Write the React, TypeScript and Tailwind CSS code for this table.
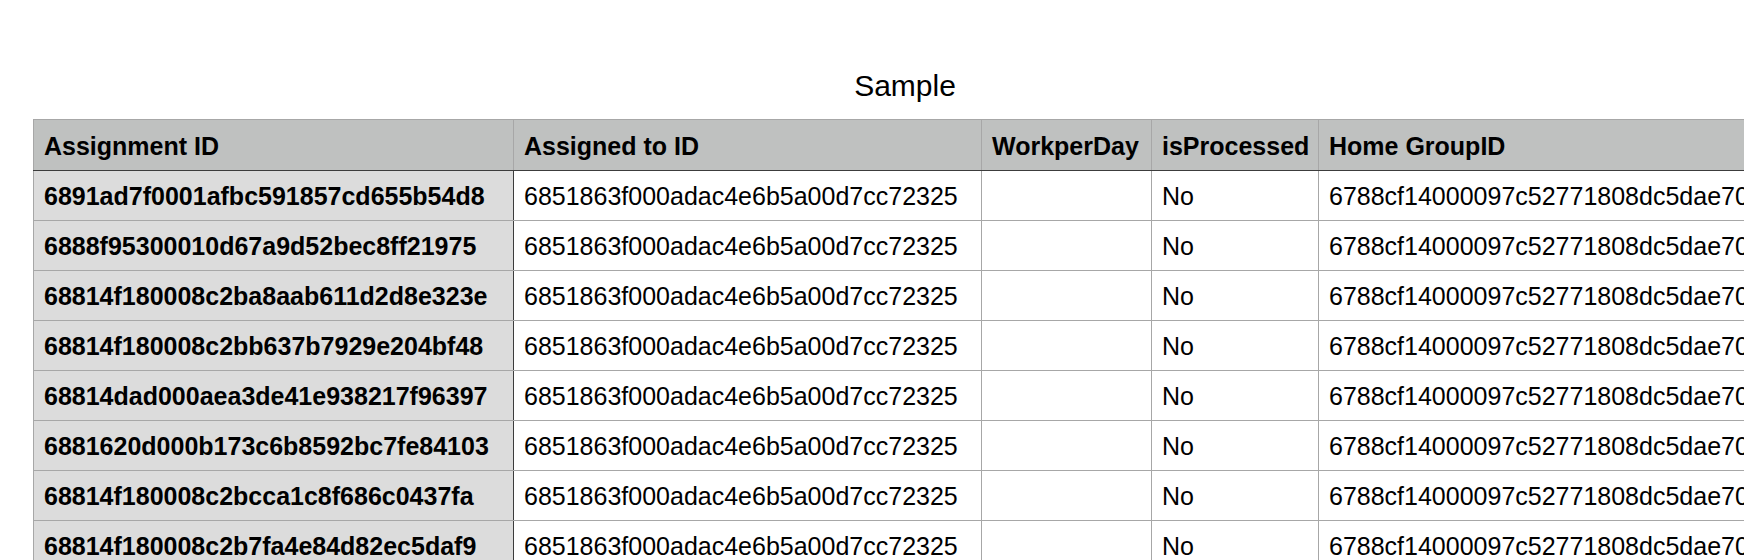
const assignments = [
  "6891ad7f0001afbc591857cd655b54d8",
  "6888f95300010d67a9d52bec8ff21975",
  "68814f180008c2ba8aab611d2d8e323e",
  "68814f180008c2bb637b7929e204bf48",
  "68814dad000aea3de41e938217f96397",
  "6881620d000b173c6b8592bc7fe84103",
  "68814f180008c2bcca1c8f686c0437fa",
  "68814f180008c2b7fa4e84d82ec5daf9",
];

const rows = assignments.map((id) => ({
  id,
  assignedTo: "6851863f000adac4e6b5a00d7cc72325",
  workperDay: "",
  isProcessed: "No",
  homeGroup: "6788cf14000097c52771808dc5dae703",
}));

const App = () => {
  return (
    <div className="w-screen h-[560px] overflow-hidden bg-white font-['Liberation_Sans',Arial,sans-serif] text-black">
      <table className="ml-[33px] mt-[69px] w-[1744px] table-fixed border-collapse text-[25px]">
        <caption className="text-[30px] leading-[34px] pb-[16px]">Sample</caption>
        <colgroup>
          <col className="w-[480px]" />
          <col className="w-[468px]" />
          <col className="w-[170px]" />
          <col className="w-[167px]" />
          <col />
        </colgroup>
        <thead>
          <tr className="h-[51px] bg-[#bfc1c0]">
            {["Assignment ID", "Assigned to ID", "WorkperDay", "isProcessed", "Home GroupID"].map((h) => (
              <th
                key={h}
                className="border border-[#a7a7a7] border-b-[#3c3c3c] px-[10px] pt-[3px] text-left font-bold whitespace-nowrap overflow-hidden"
              >
                {h}
              </th>
            ))}
          </tr>
        </thead>
        <tbody>
          {rows.map((r) => (
            <tr key={r.id} className="h-[50px]">
              <th className="border border-[#a7a7a7] border-r-[#3c3c3c] bg-[#dcdcdc] px-[10px] pt-[2px] text-left font-bold whitespace-nowrap overflow-hidden">
                {r.id}
              </th>
              <td className="border border-[#a7a7a7] px-[10px] pt-[2px] whitespace-nowrap overflow-hidden">{r.assignedTo}</td>
              <td className="border border-[#a7a7a7] px-[10px] pt-[2px] whitespace-nowrap overflow-hidden">{r.workperDay}</td>
              <td className="border border-[#a7a7a7] px-[10px] pt-[2px] whitespace-nowrap overflow-hidden">{r.isProcessed}</td>
              <td className="border border-[#a7a7a7] px-[10px] pt-[2px] whitespace-nowrap overflow-hidden">{r.homeGroup}</td>
            </tr>
          ))}
        </tbody>
      </table>
    </div>
  );
};

export default App;
